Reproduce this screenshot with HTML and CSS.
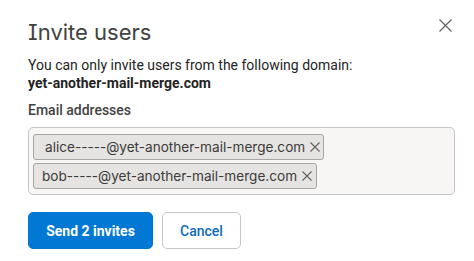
FILE: index.html
```html
<!DOCTYPE html>
<html lang="en">
<head>
<meta charset="utf-8">
<title>Invite users</title>
<link rel="stylesheet" href="styles.css">
</head>
<body>
<div class="dialog">
  <div class="header">
    <h1 class="title">Invite users</h1>
    <button class="close" aria-label="Close">
      <svg width="13" height="13" viewBox="0 0 13 13"><path d="M0.5 0.5L12.5 12.5M12.5 0.5L0.5 12.5" stroke="#616161" stroke-width="1.2" fill="none"/></svg>
    </button>
  </div>
  <p class="desc">You can only invite users from the following domain:<br><strong class="domain">yet-another-mail-merge.com</strong></p>
  <label class="label">Email addresses</label>
  <div class="field">
    <span class="chip chip-first"><span class="chip-text">alice-----@yet-another-mail-merge.com</span><svg class="chip-x" width="10" height="10" viewBox="0 0 10 10"><path d="M0.5 0.5L9.5 9.5M9.5 0.5L0.5 9.5" stroke="#616161" stroke-width="1.1" fill="none"/></svg></span>
    <span class="chip"><span class="chip-text">bob-----@yet-another-mail-merge.com</span><svg class="chip-x" width="10" height="10" viewBox="0 0 10 10"><path d="M0.5 0.5L9.5 9.5M9.5 0.5L0.5 9.5" stroke="#616161" stroke-width="1.1" fill="none"/></svg></span>
  </div>
  <div class="actions">
    <button class="btn btn-primary">Send 2 invites</button>
    <button class="btn btn-secondary">Cancel</button>
  </div>
</div>
</body>
</html>
```

FILE: styles.css
```css
html, body {
  margin: 0;
  padding: 0;
  background: #ffffff;
}
body {
  font-family: Roboto, "Noto Sans", sans-serif;
  color: #242424;
}
.dialog {
  padding: 18px 19px 0 28px;
  display: flex;
  flex-direction: column;
}
.header {
  display: flex;
  justify-content: space-between;
  align-items: flex-start;
}
.title {
  margin: 0;
  font-family: Inter, "Noto Sans", sans-serif;
  font-feature-settings: "cv08" 1;
  font-size: 22px;
  line-height: 28px;
  font-weight: 400;
  color: #424242;
}
.close {
  border: 0;
  background: none;
  padding: 0;
  margin: 1px 3px 0 0;
  width: 13px;
  height: 13px;
  display: flex;
}
.desc {
  margin: 10px 0 0 0;
  font-size: 14px;
  line-height: 18px;
  color: #242424;
}
.domain {
  font-weight: 700;
}
.label {
  margin-top: 9px;
  font-size: 14px;
  line-height: 18px;
  font-weight: 500;
  color: #424242;
}
.field {
  margin-top: 8px;
  border: 1px solid #c8c6c4;
  border-radius: 5px;
  background: #f7f6f5;
  padding: 6px 4px 5px 4px;
  display: flex;
  flex-direction: column;
  align-items: flex-start;
  gap: 3px;
}
.chip {
  display: flex;
  align-items: center;
  height: 24px;
  border: 1px solid #a8a6a4;
  border-radius: 3px;
  background: #e6e4e2;
  padding: 0 4px 0 8px;
  font-family: Inter, "Noto Sans", sans-serif;
  font-size: 13.6px;
  color: #3b3a39;
}
.chip-first {
  padding-left: 11px;
  padding-right: 3px;
}
.chip-text {
  line-height: 18px;
}
.chip-x {
  margin-left: 5px;
}
.actions {
  margin-top: 17px;
  display: flex;
  gap: 9px;
}
.btn {
  height: 37px;
  border-radius: 5px;
  font-family: Roboto, "Noto Sans", sans-serif;
  font-size: 14px;
  font-weight: 700;
  padding: 0;
  white-space: nowrap;
}
.btn-primary {
  background: #0078d4;
  border: 1px solid #0078d4;
  color: #ffffff;
  width: 125px;
}
.btn-secondary {
  background: #ffffff;
  border: 1px solid #c8c6c4;
  color: #0f6cbd;
  font-weight: 500;
  width: 79px;
}
```
